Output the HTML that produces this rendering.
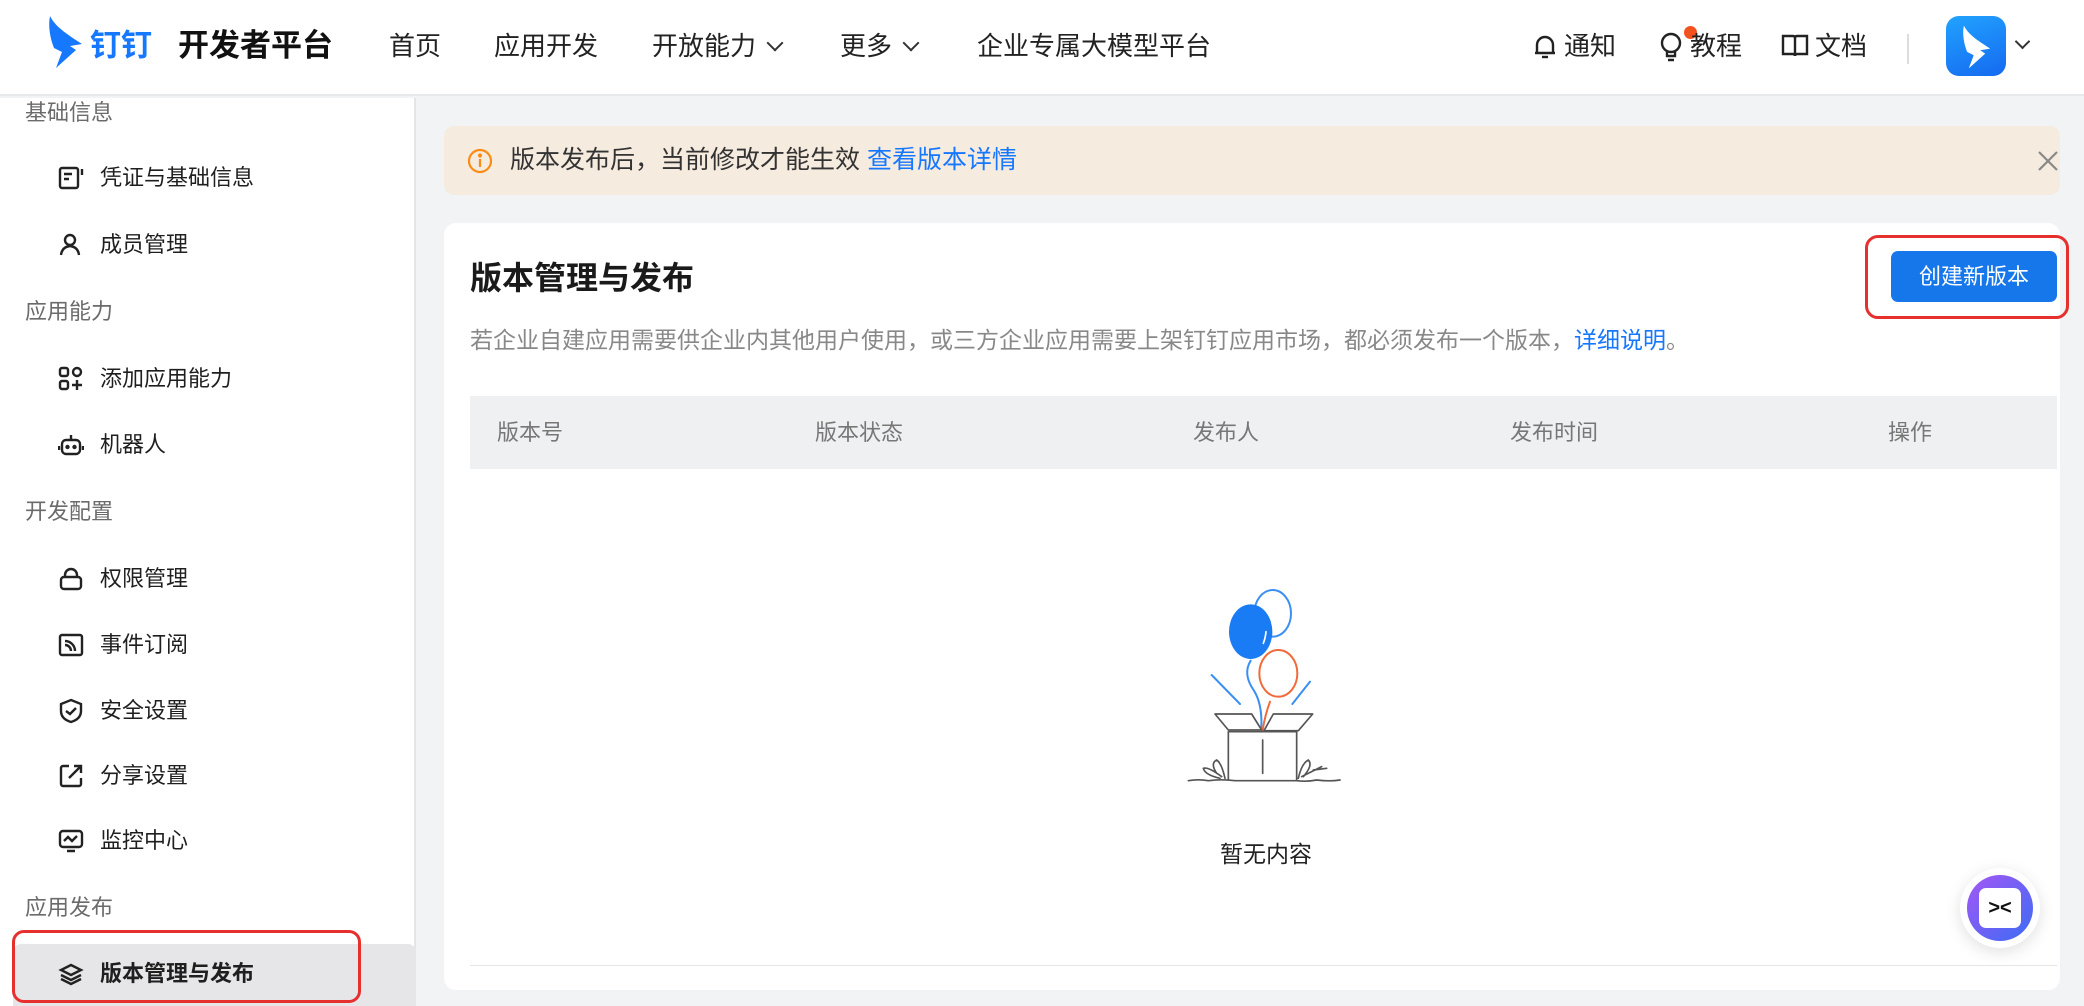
<!DOCTYPE html>
<html><head><meta charset="utf-8"><style>
*{margin:0;padding:0;box-sizing:border-box}
body{width:2084px;height:1006px;overflow:hidden;background:#f2f3f5;font-family:"Liberation Sans","Noto Sans CJK SC",sans-serif;color:#1f1f1f;position:relative}
.abs{position:absolute}
#hdr{left:0;top:0;width:2084px;height:96px;background:#fff;border-bottom:2px solid #e8e9eb}
.nav{position:absolute;top:28px;font-size:26px;line-height:36px;color:#222;white-space:nowrap}
#side{left:0;top:98px;width:416px;height:908px;background:#fff;border-right:2px solid #e4e5e7}
.grp{position:absolute;left:25px;font-size:22px;color:#6b6b6b;line-height:30px}
.it{position:absolute;left:100px;font-size:22px;color:#1f1f1f;line-height:30px}
.ic{position:absolute;left:58px;width:26px;height:26px}
</style></head><body>
<div id="hdr" class="abs">
 <svg class="abs" style="left:46px;top:14px" width="40" height="56" viewBox="0 0 40 56"><path d="M4 2 C10 14 24 22 36 30 L24 32 L30 36 L10 54 L16 38 L8 34 C4 24 2 12 4 2Z" fill="#1677ff"/></svg>
 <div class="abs" style="left:90px;top:26px;font-size:31px;font-weight:700;color:#1677ff;line-height:40px">钉钉</div>
 <div class="abs" style="left:178px;top:26px;font-size:31px;font-weight:700;color:#111;line-height:40px">开发者平台</div>
 <div class="nav" style="left:389px">首页</div>
 <div class="nav" style="left:494px">应用开发</div>
 <div class="nav" style="left:652px">开放能力 <span style="display:inline-block;width:12px;height:12px;border-right:2.5px solid #333;border-bottom:2.5px solid #333;transform:rotate(45deg);margin:0 0 6px 6px"></span></div>
 <div class="nav" style="left:840px">更多 <span style="display:inline-block;width:12px;height:12px;border-right:2.5px solid #333;border-bottom:2.5px solid #333;transform:rotate(45deg);margin:0 0 6px 6px"></span></div>
 <div class="nav" style="left:977px">企业专属大模型平台</div>
 <svg class="abs" style="left:1532px;top:33px" width="26" height="28" viewBox="0 0 26 28" fill="none" stroke="#222" stroke-width="2.4"><path d="M5 20 V12 a8 8 0 0 1 16 0 V20 H3 H23"/><path d="M10 24 h6"/></svg>
 <div class="nav" style="left:1564px">通知</div>
 <svg class="abs" style="left:1658px;top:31px" width="26" height="32" viewBox="0 0 26 32" fill="none" stroke="#222" stroke-width="2.4"><circle cx="13" cy="12" r="9"/><path d="M9 21 v4 h8 v-4 M10 29 h6"/></svg>
 <div class="abs" style="left:1684px;top:26px;width:13px;height:13px;border-radius:50%;background:#f4511e"></div>
 <div class="nav" style="left:1690px">教程</div>
 <svg class="abs" style="left:1781px;top:33px" width="28" height="26" viewBox="0 0 28 26" fill="none" stroke="#222" stroke-width="2.4"><path d="M2 3 h10 q2 0 2 2 v18 q0-2-2-2 H2Z M26 3 h-10 q-2 0 -2 2 v18 q0-2 2-2 h10Z"/></svg>
 <div class="nav" style="left:1815px">文档</div>
 <div class="abs" style="left:1907px;top:34px;width:2px;height:30px;background:#ddd"></div>
 <div class="abs" style="left:1946px;top:16px;width:60px;height:60px;border-radius:13px;background:linear-gradient(160deg,#21a3ff,#1569f0)"></div>
 <svg class="abs" style="left:1960px;top:24px" width="34" height="46" viewBox="0 0 40 56"><path d="M4 2 C10 14 24 22 36 30 L24 32 L30 36 L10 54 L16 38 L8 34 C4 24 2 12 4 2Z" fill="#fff"/></svg>
 <div class="abs" style="left:2017px;top:36px;width:11px;height:11px;border-right:2.3px solid #333;border-bottom:2.3px solid #333;transform:rotate(45deg)"></div>
</div>

<div id="side" class="abs">
 <div class="grp" style="top:0px">基础信息</div>
 <svg class="ic" style="top:67px" viewBox="0 0 26 26" fill="none" stroke="#222" stroke-width="2.4"><rect x="2" y="3" width="18" height="20" rx="2"/><path d="M6 9 h8 M6 14 h5 M24 4 v6"/></svg>
 <div class="it" style="top:65px">凭证与基础信息</div>
 <svg class="ic" style="top:134px" viewBox="0 0 26 26" fill="none" stroke="#222" stroke-width="2.4"><circle cx="12" cy="8" r="5"/><path d="M3 23 q1-8 9-9 q8 1 9 9"/></svg>
 <div class="it" style="top:132px">成员管理</div>
 <div class="grp" style="top:199px">应用能力</div>
 <svg class="ic" style="top:268px" viewBox="0 0 26 26" fill="none" stroke="#222" stroke-width="2.4"><rect x="2" y="2" width="8" height="8" rx="2"/><rect x="2" y="15" width="8" height="8" rx="2"/><rect x="15" y="2" width="8" height="8" rx="4"/><path d="M19 14 v10 M14 19 h10"/></svg>
 <div class="it" style="top:266px">添加应用能力</div>
 <svg class="ic" style="top:334px" viewBox="0 0 26 26" fill="none" stroke="#222" stroke-width="2.4"><rect x="4" y="8" width="18" height="14" rx="4"/><path d="M13 3 v5 M1 14 v4 M25 14 v4"/><circle cx="9.5" cy="15" r="1" fill="#222"/><circle cx="16.5" cy="15" r="1" fill="#222"/></svg>
 <div class="it" style="top:332px">机器人</div>
 <div class="grp" style="top:399px">开发配置</div>
 <svg class="ic" style="top:468px" viewBox="0 0 26 26" fill="none" stroke="#222" stroke-width="2.4"><rect x="3" y="11" width="20" height="12" rx="3"/><path d="M7 11 v-2 a6 6 0 0 1 12 0 v2"/></svg>
 <div class="it" style="top:466px">权限管理</div>
 <svg class="ic" style="top:534px" viewBox="0 0 26 26" fill="none" stroke="#222" stroke-width="2.4"><rect x="2" y="3" width="22" height="20" rx="2"/><path d="M7 9 a10 10 0 0 1 10 10 M7 13 a6 6 0 0 1 6 6"/></svg>
 <div class="it" style="top:532px">事件订阅</div>
 <svg class="ic" style="top:600px" viewBox="0 0 26 26" fill="none" stroke="#222" stroke-width="2.4"><path d="M13 2 L23 6 V13 Q23 21 13 24 Q3 21 3 13 V6Z"/><path d="M8 13 l4 3 l6-6"/></svg>
 <div class="it" style="top:598px">安全设置</div>
 <svg class="ic" style="top:665px" viewBox="0 0 26 26" fill="none" stroke="#222" stroke-width="2.4"><path d="M11 3 H5 a2 2 0 0 0-2 2 v16 a2 2 0 0 0 2 2 h16 a2 2 0 0 0 2-2 v-6 M16 3 h7 v7 M23 3 L11 15"/></svg>
 <div class="it" style="top:663px">分享设置</div>
 <svg class="ic" style="top:730px" viewBox="0 0 26 26" fill="none" stroke="#222" stroke-width="2.4"><rect x="2" y="3" width="22" height="16" rx="3"/><path d="M6 13 l4-4 l4 4 l5-5 M9 23 h8"/></svg>
 <div class="it" style="top:728px">监控中心</div>
 <div class="grp" style="top:795px">应用发布</div>
 <div class="abs" style="left:13px;top:846px;width:403px;height:62px;background:#e6e6e8;border-radius:8px 8px 0 0"></div>
 <svg class="ic" style="top:863px" viewBox="0 0 26 26" fill="none" stroke="#222" stroke-width="2.4"><path d="M13 4 L23 9 L13 14 L3 9Z M3 14 L13 19 L23 14 M3 18 L13 23 L23 18"/></svg>
 <div class="it" style="top:861px;font-weight:700">版本管理与发布</div>
 <div class="abs" style="left:12px;top:832px;width:349px;height:73px;border:3px solid #e5302e;border-radius:12px"></div>
</div>

<div class="abs" style="left:444px;top:126px;width:1616px;height:69px;background:#f6ebdf;border-radius:10px"></div>
<svg class="abs" style="left:467px;top:148px" width="26" height="26" viewBox="0 0 26 26" fill="none" stroke="#fa8c16" stroke-width="2.2"><circle cx="13" cy="13" r="11"/><path d="M13 11 v8"/><circle cx="13" cy="7.5" r="1" fill="#fa8c16"/></svg>
<div class="abs" style="left:510px;top:144px;font-size:25px;line-height:33px;color:#333">版本发布后，当前修改才能生效 <span style="color:#1677ff">查看版本详情</span></div>
<svg class="abs" style="left:2037px;top:150px" width="22" height="22" viewBox="0 0 22 22" stroke="#888" stroke-width="2.2"><path d="M2 2 L20 20 M20 2 L2 20"/></svg>

<div class="abs" style="left:444px;top:223px;width:1616px;height:767px;background:#fff;border-radius:12px"></div>
<div class="abs" style="left:470px;top:257px;font-size:32px;font-weight:700;line-height:42px;color:#1a1a1a">版本管理与发布</div>
<div class="abs" style="left:470px;top:325px;font-size:23px;line-height:30px;color:#888">若企业自建应用需要供企业内其他用户使用，或三方企业应用需要上架钉钉应用市场，都必须发布一个版本，<span style="color:#1677ff">详细说明</span>。</div>
<div class="abs" style="left:1891px;top:251px;width:166px;height:51px;background:#1677eb;border-radius:7px;color:#fff;font-size:22px;line-height:51px;text-align:center">创建新版本</div>
<div class="abs" style="left:1865px;top:235px;width:204px;height:84px;border:3px solid #e5302e;border-radius:13px"></div>

<div class="abs" style="left:470px;top:396px;width:1587px;height:73px;background:#eff0f2"></div>
<div class="abs" style="left:497px;top:418px;font-size:22px;line-height:30px;color:#777">版本号</div>
<div class="abs" style="left:815px;top:418px;font-size:22px;line-height:30px;color:#777">版本状态</div>
<div class="abs" style="left:1193px;top:418px;font-size:22px;line-height:30px;color:#777">发布人</div>
<div class="abs" style="left:1510px;top:418px;font-size:22px;line-height:30px;color:#777">发布时间</div>
<div class="abs" style="left:1888px;top:418px;font-size:22px;line-height:30px;color:#777">操作</div>

<svg class="abs" style="left:1130px;top:560px" width="420" height="320" viewBox="0 0 1260 960" fill="none" stroke-linecap="round" stroke-linejoin="round">
 <ellipse cx="428" cy="160" rx="55" ry="70" stroke="#3b8ff2" stroke-width="6"/>
 <ellipse cx="362" cy="215" rx="65" ry="82" fill="#1a7cf5"/>
 <path d="M408 215 q-2 20-8 35" stroke="#fff" stroke-width="5"/>
 <path d="M362 302 q-25 40 10 90 q25 40 22 110" stroke="#3b8ff2" stroke-width="6"/>
 <ellipse cx="445" cy="340" rx="57" ry="70" stroke="#f06a3a" stroke-width="6"/>
 <path d="M420 425 q-15 40-22 85" stroke="#f06a3a" stroke-width="6"/>
 <path d="M245 345 L330 432 M540 365 L487 432" stroke="#3b8ff2" stroke-width="6"/>
 <g stroke="#555" stroke-width="5">
  <path d="M255 462 H365 L395 510 H295Z M430 462 H548 L505 512 H402Z"/>
  <path d="M295 515 V660 M500 512 V660 M295 515 H500 M398 540 V640"/>
  <path d="M175 662 q30-5 60 0 q40-5 80 0 H500 q30 4 60-2 q40 5 70 0"/>
  <path d="M285 655 q-10-45-25-55 q-20 10 0 40 M275 650 q-40-30-55-25 q5 20 50 30"/>
  <path d="M505 655 q10-45 30-55 q15 15-15 50 M515 650 q40-20 60-30 M550 630 l40-5"/>
 </g>
</svg>
<div class="abs" style="left:1190px;top:838px;width:152px;text-align:center;font-size:23px;line-height:32px;color:#222">暂无内容</div>

<div class="abs" style="left:470px;top:965px;width:1587px;height:1px;background:#e4e5e7"></div>

<div class="abs" style="left:1960px;top:868px;width:80px;height:80px;border-radius:50%;background:#fff;box-shadow:0 4px 16px rgba(0,0,0,.12)"></div>
<div class="abs" style="left:1967px;top:875px;width:66px;height:66px;border-radius:50%;background:linear-gradient(135deg,#a457f5,#3b6cf5)"></div>
<div class="abs" style="left:1979px;top:888px;width:42px;height:40px;border-radius:7px;background:#fff;font-size:20px;line-height:40px;text-align:center;font-weight:700;color:#111">&gt;&lt;</div>
</body></html>
